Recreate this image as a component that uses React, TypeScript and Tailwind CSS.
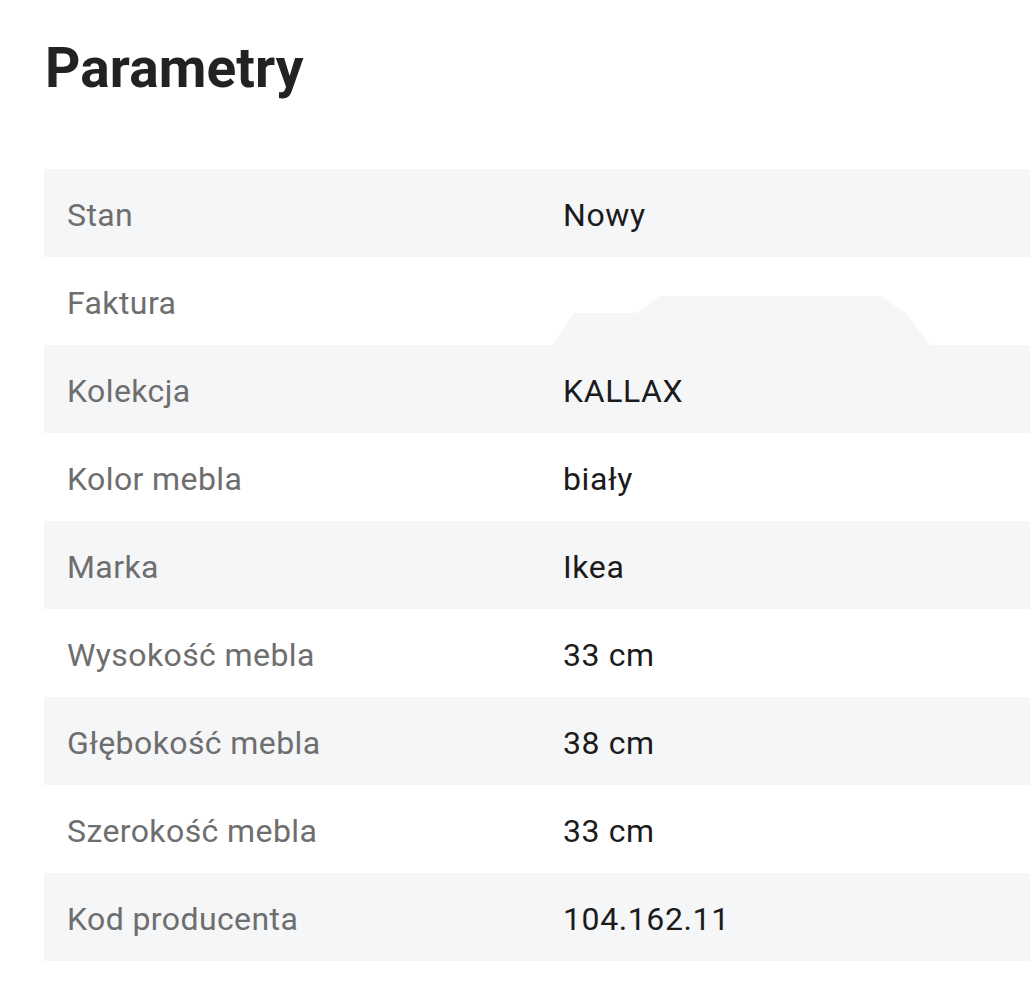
const params = [
  { label: "Stan", value: "Nowy" },
  { label: "Faktura", value: "" },
  { label: "Kolekcja", value: "KALLAX" },
  { label: "Kolor mebla", value: "biały" },
  { label: "Marka", value: "Ikea" },
  { label: "Wysokość mebla", value: "33 cm" },
  { label: "Głębokość mebla", value: "38 cm" },
  { label: "Szerokość mebla", value: "33 cm" },
  { label: "Kod producenta", value: "104.162.11" },
];

export default function App() {
  return (
    <div className="min-h-screen bg-white font-['Roboto',sans-serif] pl-[44px] pt-[36px]">
      <h1 className="text-[55px] leading-[64px] font-bold text-[#222] pl-[1px] tracking-[0.1px]">Parametry</h1>

      <div className="relative mt-[69px]">
        {params.map((p, i) => (
          <div
            key={p.label}
            className={`flex items-center h-[88px] pt-[3px] ${i % 2 === 0 ? "bg-[#f5f6f8]" : "bg-white"}`}
          >
            <span className="w-[519px] pl-[23px] text-[32px] tracking-[0.4px] text-[#6e6e6e]">{p.label}</span>
            <span className="text-[32px] tracking-[0.6px] text-[#1b1b1b]">{p.value}</span>
          </div>
        ))}

        {/* smudged-out value in the Faktura row */}
        <svg className="absolute left-[508px] top-[126px]" width="390" height="50" viewBox="0 0 390 50">
          <polygon
            points="0,50 22,18 84,18 108,1 328,1 354,18 378,50"
            fill="#f5f6f8"
          />
        </svg>
      </div>
    </div>
  );
}
